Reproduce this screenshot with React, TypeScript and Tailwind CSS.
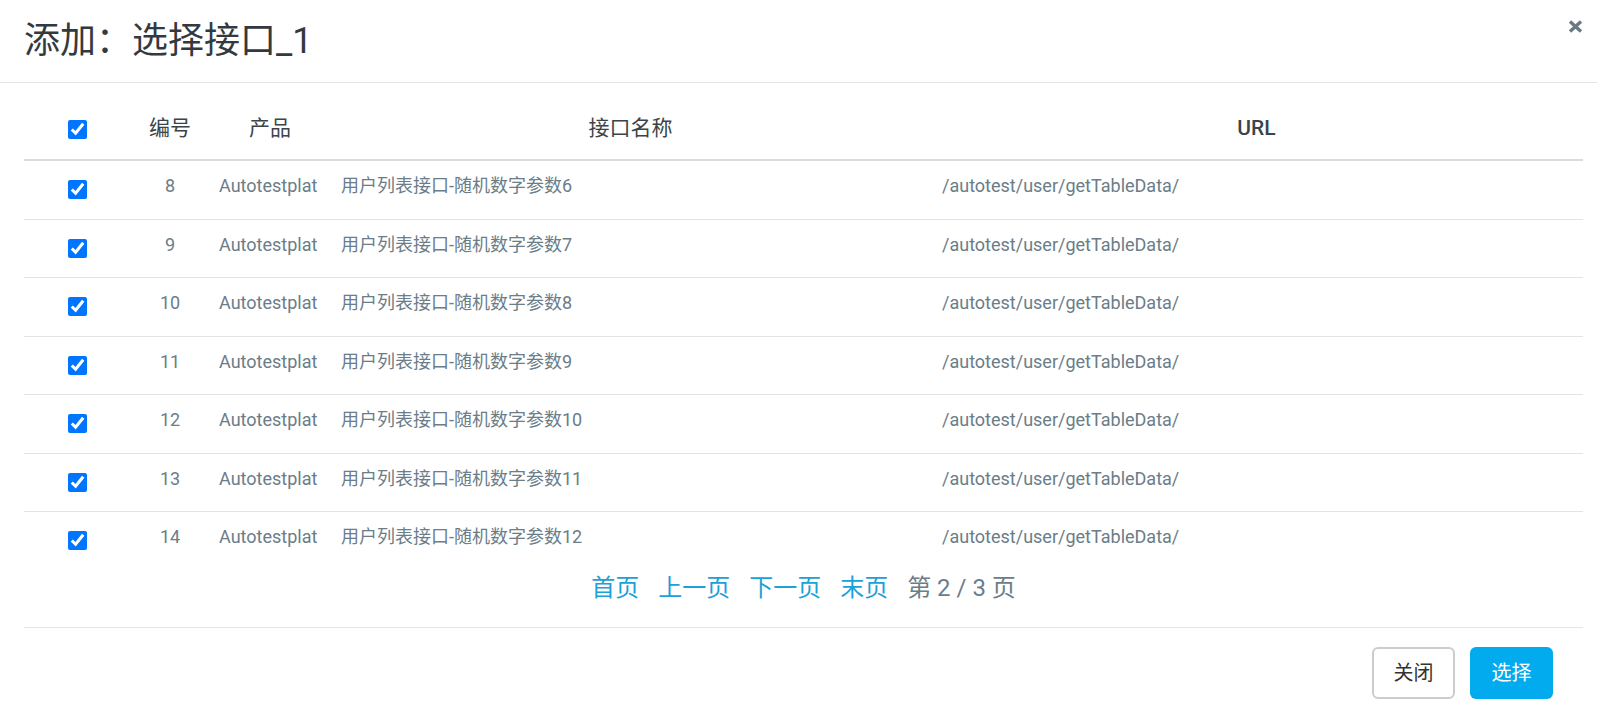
import { useState } from 'react'

const rows = [
  { id: 8, product: 'Autotestplat', name: '用户列表接口-随机数字参数6', url: '/autotest/user/getTableData/' },
  { id: 9, product: 'Autotestplat', name: '用户列表接口-随机数字参数7', url: '/autotest/user/getTableData/' },
  { id: 10, product: 'Autotestplat', name: '用户列表接口-随机数字参数8', url: '/autotest/user/getTableData/' },
  { id: 11, product: 'Autotestplat', name: '用户列表接口-随机数字参数9', url: '/autotest/user/getTableData/' },
  { id: 12, product: 'Autotestplat', name: '用户列表接口-随机数字参数10', url: '/autotest/user/getTableData/' },
  { id: 13, product: 'Autotestplat', name: '用户列表接口-随机数字参数11', url: '/autotest/user/getTableData/' },
  { id: 14, product: 'Autotestplat', name: '用户列表接口-随机数字参数12', url: '/autotest/user/getTableData/' },
]

const cols = 'grid grid-cols-[107px_78px_122px_599px_1fr]'

function Check({ checked, onChange }: { checked: boolean; onChange: () => void }) {
  return (
    <input
      type="checkbox"
      checked={checked}
      onChange={onChange}
      className="w-[19px] h-[19px] m-0 accent-[#0075ff] cursor-pointer"
    />
  )
}

export default function App() {
  const [selected, setSelected] = useState<number[]>(rows.map((r) => r.id))
  const allChecked = selected.length === rows.length

  const toggle = (id: number) =>
    setSelected((s) => (s.includes(id) ? s.filter((x) => x !== id) : [...s, id]))

  return (
    <div
      className="w-[1597px] h-[721px] bg-white overflow-hidden"
      style={{ fontFamily: 'Roboto, "Noto Sans CJK SC", sans-serif' }}
    >
      {/* Header */}
      <div className="h-[83px] border-b border-[#e5e5e5] flex justify-between items-start pl-6 pr-[14px]">
        <h4 className="text-[36px] leading-[50px] mt-[16px] text-[#333a3f] font-normal">添加：选择接口_1</h4>
        <button className="mt-[20px] text-[#6b7a82]">
          <svg width="15" height="13" viewBox="0 0 15 13">
            <path d="M2 1.5 L13 11.5 M13 1.5 L2 11.5" stroke="currentColor" strokeWidth="3.4" strokeLinecap="butt" />
          </svg>
        </button>
      </div>

      {/* Body */}
      <div className="pt-[18px] ml-6 mr-[14px]">
        <div className={`${cols} h-[60px] border-b-2 border-[#dcdcdc] items-center text-[21px] text-[#3a4449] pb-[2px]`}>
          <div className="flex justify-center">
            <Check checked={allChecked} onChange={() => setSelected(allChecked ? [] : rows.map((r) => r.id))} />
          </div>
          <div className="text-center">编号</div>
          <div className="text-center">产品</div>
          <div className="text-center">接口名称</div>
          <div className="text-center font-medium">URL</div>
        </div>

        {rows.map((r, i) => (
          <div
            key={r.id}
            className={`${cols} h-[58.5px] items-start text-[18px] leading-[25px] text-[#6a7d88] ${
              i < rows.length - 1 ? 'border-b border-[#e3e3e3]' : ''
            }`}
          >
            <div className="flex justify-center pt-[19px]">
              <Check checked={selected.includes(r.id)} onChange={() => toggle(r.id)} />
            </div>
            <div className="text-center pt-3">{r.id}</div>
            <div className="pl-[10px] pt-3">{r.product}</div>
            <div className="pl-[10px] pt-3">{r.name}</div>
            <div className="pl-3 pt-3">{r.url}</div>
          </div>
        ))}

        <div className="h-[57px] flex justify-center gap-[19px] text-[24px] leading-[32px] pt-[1px] border-b border-[#e5e5e5]">
          <a className="text-[#1ba0d9] cursor-pointer">首页</a>
          <a className="text-[#1ba0d9] cursor-pointer">上一页</a>
          <a className="text-[#1ba0d9] cursor-pointer">下一页</a>
          <a className="text-[#1ba0d9] cursor-pointer">末页</a>
          <span className="text-[#6a7d88]">第 2 / 3 页</span>
        </div>
      </div>

      {/* Footer */}
      <div className="flex justify-end gap-[15px] pt-[19px] pr-[44px]">
        <button className="w-[83px] h-[52px] border-2 border-[#cccccc] rounded-[6px] bg-white text-[20px] text-[#333]">
          关闭
        </button>
        <button className="w-[83px] h-[52px] rounded-[6px] bg-[#02aaee] text-[20px] text-white">选择</button>
      </div>
    </div>
  )
}
